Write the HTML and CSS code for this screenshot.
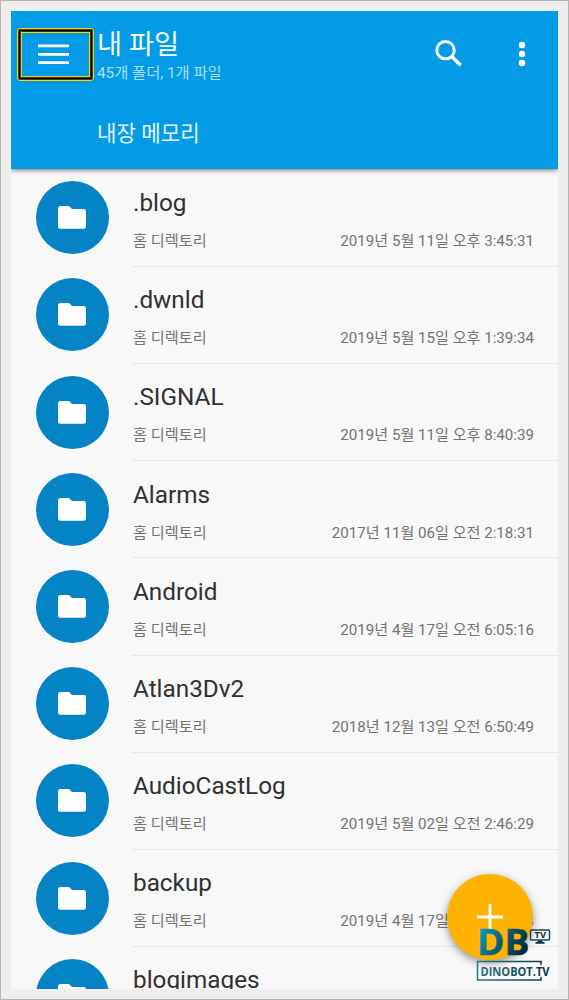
FILE: index.html
```html
<!DOCTYPE html>
<html lang="ko">
<head>
<meta charset="utf-8">
<title>내 파일</title>
<link rel="stylesheet" href="styles.css">
</head>
<body>
<svg class="defs" width="0" height="0">
  <symbol id="folder" viewBox="0 0 28 23"><path d="M2.500 0H11L14 3H25.800Q28 3 28 5.200V20.500Q28 22.700 25.800 22.700H2.200Q0 22.700 0 20.500V2.500Q0 0 2.500 0Z" fill="#fff"/></symbol>
</svg>
<div class="screen">
  <header class="appbar">
    <div class="toolbar">
      <button class="menu" aria-label="메뉴"><svg width="31" height="22" viewBox="0 0 31 22"><path d="M0 1.900H31M0 10.300H31M0 18.700H31" stroke="#fff" stroke-width="2.800"/></svg></button>
      <div class="heading"><h1>내 파일</h1><p>45개 폴더, 1개 파일</p></div>
      <svg class="search" width="28" height="28" viewBox="0 0 28 28" fill="none" stroke="#fff"><circle cx="10.500" cy="10.200" r="8.700" stroke-width="2.900"/><path d="M16.800 16.500L25.600 25.300" stroke-width="3.500"/></svg>
      <svg class="more" width="8" height="26" viewBox="0 0 8 26" fill="#fff"><circle cx="4" cy="4" r="3.200"/><circle cx="4" cy="13" r="3.200"/><circle cx="4" cy="22" r="3.200"/></svg>
    </div>
    <div class="location">내장 메모리</div>
  </header>
  <main class="list">
    <div class="row"><span class="avatar"><svg><use href="#folder"/></svg></span><div class="info"><h2>.blog</h2><div class="meta"><span>홈 디렉토리</span><time>2019년 5월 11일 오후 3:45:31</time></div></div></div>
    <div class="row"><span class="avatar"><svg><use href="#folder"/></svg></span><div class="info"><h2>.dwnld</h2><div class="meta"><span>홈 디렉토리</span><time>2019년 5월 15일 오후 1:39:34</time></div></div></div>
    <div class="row"><span class="avatar"><svg><use href="#folder"/></svg></span><div class="info"><h2>.SIGNAL</h2><div class="meta"><span>홈 디렉토리</span><time>2019년 5월 11일 오후 8:40:39</time></div></div></div>
    <div class="row"><span class="avatar"><svg><use href="#folder"/></svg></span><div class="info"><h2>Alarms</h2><div class="meta"><span>홈 디렉토리</span><time>2017년 11월 06일 오전 2:18:31</time></div></div></div>
    <div class="row"><span class="avatar"><svg><use href="#folder"/></svg></span><div class="info"><h2>Android</h2><div class="meta"><span>홈 디렉토리</span><time>2019년 4월 17일 오전 6:05:16</time></div></div></div>
    <div class="row"><span class="avatar"><svg><use href="#folder"/></svg></span><div class="info"><h2>Atlan3Dv2</h2><div class="meta"><span>홈 디렉토리</span><time>2018년 12월 13일 오전 6:50:49</time></div></div></div>
    <div class="row"><span class="avatar"><svg><use href="#folder"/></svg></span><div class="info"><h2>AudioCastLog</h2><div class="meta"><span>홈 디렉토리</span><time>2019년 5월 02일 오전 2:46:29</time></div></div></div>
    <div class="row"><span class="avatar"><svg><use href="#folder"/></svg></span><div class="info"><h2>backup</h2><div class="meta"><span>홈 디렉토리</span><time>2019년 4월 17일 오전 6:05:13</time></div></div></div>
    <div class="row"><span class="avatar"><svg><use href="#folder"/></svg></span><div class="info"><h2>blogimages</h2></div></div>
  </main>
  <button class="fab" aria-label="추가"><svg width="26" height="26" viewBox="0 0 26 26"><path d="M13 0V26M0 13H26" stroke="#fff" stroke-width="2.800"/></svg></button>
  <svg class="brand" width="76" height="56" viewBox="0 0 76 56">
    <defs>
      <linearGradient id="teal" gradientUnits="userSpaceOnUse" x1="2" y1="4" x2="50" y2="32"><stop offset="0" stop-color="#0a9cc0"/><stop offset="0.500" stop-color="#0b5a70"/><stop offset="1" stop-color="#04212c"/></linearGradient>
      <linearGradient id="edge" gradientUnits="userSpaceOnUse" x1="0" y1="0" x2="76" y2="0"><stop offset="0" stop-color="#28748a"/><stop offset="1" stop-color="#0b3340"/></linearGradient>
    </defs>
    <text x="1" y="29.200" class="brand-db" textLength="52.500" lengthAdjust="spacingAndGlyphs" fill="url(#teal)">DB</text>
    <rect x="54.500" y="4" width="19" height="10" rx="1" fill="none" stroke="#174858" stroke-width="1.400"/>
    <text x="58.500" y="12.200" class="brand-tv" textLength="11.500" lengthAdjust="spacingAndGlyphs">TV</text>
    <path d="M61.500 14.500H66.500V16H68.500V17.800H59.500V16H61.500Z" fill="#0b3340"/>
    <path d="M65 39V35.500H1.500V54H65V51" fill="none" stroke="url(#edge)" stroke-width="1.500"/>
    <text x="4.500" y="49.700" class="brand-name" textLength="69" lengthAdjust="spacingAndGlyphs" fill="url(#edge)">DINOBOT.TV</text>
  </svg>
</div>
</body>
</html>
```
FILE: styles.css
```css
* { box-sizing: border-box; }
body {
  margin: 0;
  height: 1000px;
  padding: 10px;
  border: 1px solid #b5b5b5;
  background: #eee;
  font-family: Roboto, "Noto Sans CJK KR", sans-serif;
  overflow: hidden;
}
h1, h2, p { margin: 0; font-weight: 400; }
button { padding: 0; border: 0; background: none; }
.defs { position: absolute; }
.screen {
  position: relative;
  display: flex;
  flex-direction: column;
  height: 978px;
  overflow: hidden;
  background: #f8f8f8;
}
.appbar {
  flex: none;
  height: 158px;
  background: #049be6;
  color: #fff;
  box-shadow: 0 1px 5px rgba(0, 0, 0, .55);
  z-index: 1;
}
.toolbar {
  display: flex;
  align-items: flex-start;
  height: 90px;
  padding: 17px 32px 0 6px;
}
.menu {
  display: flex;
  justify-content: center;
  align-items: center;
  width: 77px;
  height: 53px;
  padding-right: 4px;
  border: 1px solid #ffd800;
  border-radius: 3px;
  box-shadow: inset 0 0 0 1px #4b3d00, inset 0 0 0 2px #000, inset 0 0 0 3px #3a2f00, inset 0 0 0 4px #ffd800;
}
.heading { flex: 1; padding-left: 3px; }
h1 { font-size: 27.300px; line-height: 34px; color: #f2fafe; }
.heading p { font-size: 15.300px; line-height: 22px; color: #a9def8; }
.search { margin: 12px 55px 0 0; }
.more { margin-top: 13px; }
.location {
  padding: 18px 0 0 86px;
  font-size: 21.200px;
  line-height: 30px;
  color: #e4f5fd;
}
.list { flex: 1; min-height: 0; padding-top: .600px; }
.row {
  display: flex;
  align-items: center;
  height: 97.200px;
  padding-left: 24.500px;
}
.avatar {
  display: grid;
  place-items: center;
  flex: none;
  width: 73px;
  height: 73px;
  margin-bottom: .800px;
  border-radius: 50%;
  background: #0584c5;
}
.avatar svg { width: 28px; height: 23px; }
.info {
  flex: 1;
  height: 100%;
  margin-left: 23.500px;
  padding: 18.400px 24px 0 1px;
  border-bottom: 1px solid #e8e8e8;
}
h2 { font-size: 24.300px; line-height: 30px; color: #303030; }
.meta {
  display: flex;
  justify-content: space-between;
  margin-top: 12px;
  font-size: 15.200px;
  line-height: 22px;
  color: #737373;
}
.meta time { font-size: 15.120px; }
.fab {
  position: absolute;
  left: 436px;
  top: 863px;
  display: grid;
  place-items: center;
  width: 86px;
  height: 86px;
  border-radius: 50%;
  background: #ffb300;
  box-shadow: 0 3px 8px rgba(0, 0, 0, .42);
}
.brand { position: absolute; left: 465px; top: 915px; }
.brand-db { font: 700 36.500px "Open Sans", sans-serif; stroke: url(#teal); stroke-width: .500px; }
.brand-tv { font: 700 9px "Open Sans", sans-serif; fill: #0b3340; }
.brand-name { font: 700 12.500px "Open Sans", sans-serif; }
```
